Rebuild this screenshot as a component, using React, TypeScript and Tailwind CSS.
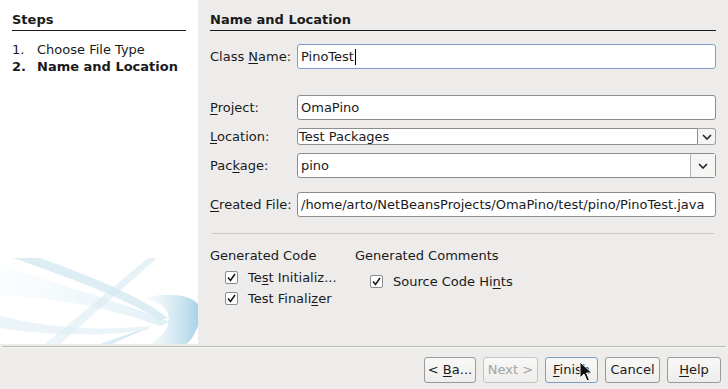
import type { ReactNode } from 'react';

const font = { fontFamily: '"DejaVu Sans", "Liberation Sans", sans-serif' };

function U({ children }: { children: ReactNode }) {
  return <span className="underline underline-offset-2">{children}</span>;
}

function Label({ children }: { children: ReactNode }) {
  return <div className="w-[87px] shrink-0 text-[13px] leading-[16px] text-[#1a1a1a]">{children}</div>;
}

function Field({ value, focused }: { value: string; focused?: boolean }) {
  return (
    <div
      className={`flex h-[25px] flex-1 items-center rounded-[3px] border bg-white px-[3px] text-[13px] text-[#1a1a1a] ${
        focused ? 'border-[#7f9dc9]' : 'border-[#8c8c8c]'
      }`}
    >
      {value}
      {focused && <span className="ml-[1px] h-[16px] w-px bg-black" />}
    </div>
  );
}

function Chevron() {
  return (
    <svg width="10" height="6" viewBox="0 0 10 6">
      <path d="M1 1 L5 5 L9 1" fill="none" stroke="#222" strokeWidth="1.6" />
    </svg>
  );
}

function Combo({ value, small }: { value: string; small?: boolean }) {
  if (small) {
    return (
      <div className="flex h-[17px] flex-1 items-stretch">
        <div className="flex flex-1 items-center rounded-l-[3px] border border-[#8c8c8c] bg-white pl-[1px] text-[13px] text-[#1a1a1a]">
          {value}
        </div>
        <div className="flex w-[18px] items-center justify-center rounded-r-[3px] border border-l-0 border-[#a0a0a0] bg-[#f5f5f4]">
          <Chevron />
        </div>
      </div>
    );
  }
  return (
    <div className="flex h-[25px] flex-1 items-stretch rounded-[3px] border border-[#8c8c8c] bg-white">
      <div className="flex flex-1 items-center px-[3px] text-[13px] text-[#1a1a1a]">{value}</div>
      <div className="flex w-[25px] items-center justify-center border-l border-[#b4b4b4] bg-[#f5f5f4]">
        <Chevron />
      </div>
    </div>
  );
}

function Check({ children }: { children: ReactNode }) {
  return (
    <div className="flex h-[21px] items-center text-[13px] text-[#1a1a1a]">
      <svg width="13" height="13" viewBox="0 0 13 13" className="mr-[10px]">
        <rect x="0.5" y="0.5" width="12" height="12" rx="1.5" fill="#fff" stroke="#8c8c8c" />
        <path d="M3 6.5 L5.5 9.5 L10 3" fill="none" stroke="#1a1a1a" strokeWidth="1.6" />
      </svg>
      <span>{children}</span>
    </div>
  );
}

function Btn({ children, w, disabled, focused }: { children: ReactNode; w: string; disabled?: boolean; focused?: boolean }) {
  return (
    <div
      className={`flex h-[26px] items-center justify-center rounded-[3px] border bg-gradient-to-b from-[#f8f8f7] to-[#eeedec] text-[13px] ${w} ${
        disabled
          ? 'border-[#c4c4c4] text-[#a4a4a4]'
          : focused
            ? 'border-[#7f9dc9] text-[#1a1a1a]'
            : 'border-[#9a9a9a] text-[#1a1a1a]'
      }`}
    >
      <span>{children}</span>
    </div>
  );
}

function Swoosh() {
  return (
    <svg width="198" height="88" viewBox="0 0 198 88" className="block">
      <defs>
        <linearGradient id="g1" x1="0" y1="0" x2="1" y2="0">
          <stop offset="0" stopColor="#d6ebf4" stopOpacity="0.2" />
          <stop offset="1" stopColor="#bcdcea" stopOpacity="0.9" />
        </linearGradient>
        <linearGradient id="g2" x1="0" y1="0" x2="1" y2="0">
          <stop offset="0" stopColor="#e4f1f7" stopOpacity="0.3" />
          <stop offset="1" stopColor="#a9d3e6" />
        </linearGradient>
        <linearGradient id="g3" x1="0" y1="0" x2="0" y2="1">
          <stop offset="0" stopColor="#cfe6f0" stopOpacity="0.8" />
          <stop offset="1" stopColor="#d8ebf3" stopOpacity="0.7" />
        </linearGradient>
      </defs>
      <path d="M0 8 C60 30 120 45 170 66 L160 70 C110 52 50 40 0 40 Z" fill="url(#g1)" opacity="0.5" />
      <path d="M13 2 L40 2 C90 20 140 40 168 62 L160 64 C120 40 70 22 13 2 Z" fill="#cde5ef" opacity="0.7" />
      <path d="M148 2 L157 2 L60 88 L45 88 Z" fill="url(#g3)" opacity="0.7" />
      <path d="M145 42 C165 36 190 38 198 48 L198 70 C194 80 190 86 186 88 L150 88 C170 78 172 62 165 52 C160 47 152 44 145 42 Z" fill="url(#g2)" />
      <path d="M100 88 L140 74 L148 72 L112 88 Z" fill="#cfe6f0" opacity="0.8" />
      <path d="M0 60 C40 70 90 76 150 70 L148 74 C90 82 40 78 0 72 Z" fill="#dcedf5" opacity="0.6" />
    </svg>
  );
}

function Cursor() {
  return (
    <svg width="14" height="22" viewBox="0 0 14 22" className="pointer-events-none absolute left-[579px] top-[361px]">
      <path d="M1 1 L1 17 L5 13 L8 20 L10.5 19 L7.5 12 L13 12 Z" fill="#111" stroke="#fff" strokeWidth="1" />
    </svg>
  );
}

export default function App() {
  return (
    <div className="relative h-[389px] w-[728px] overflow-hidden bg-[#edeceb]" style={font}>
      <div className="flex h-[344px]">
        <div className="flex w-[198px] flex-col bg-white">
          <div className="px-[12px] pt-[12px]">
            <div className="border-b border-[#1a1a1a] pb-[2px] text-[13px] font-bold leading-[16px] text-[#1a1a1a]">Steps</div>
            <div className="mt-[10px] text-[13px] leading-[17px] text-[#1a1a1a]">
              <div className="flex">
                <span className="w-[25px]">1.</span>Choose File Type
              </div>
              <div className="flex font-bold">
                <span className="w-[25px]">2.</span>Name and Location
              </div>
            </div>
          </div>
          <div className="mt-auto">
            <Swoosh />
          </div>
        </div>

        <div className="flex-1 px-[12px] pt-[12px]">
          <div className="border-b border-[#1a1a1a] pb-[2px] text-[13px] font-bold leading-[16px] text-[#1a1a1a]">Name and Location</div>

          <div className="mt-[13px] flex items-center">
            <Label>
              Class <U>N</U>ame:
            </Label>
            <Field value="PinoTest" focused />
          </div>

          <div className="mt-[26px] flex items-center">
            <Label>
              <U>P</U>roject:
            </Label>
            <Field value="OmaPino" />
          </div>

          <div className="mt-[8px] flex items-center">
            <Label>
              <U>L</U>ocation:
            </Label>
            <Combo value="Test Packages" small />
          </div>

          <div className="mt-[8px] flex items-center">
            <Label>
              Pac<U>k</U>age:
            </Label>
            <Combo value="pino" />
          </div>

          <div className="mt-[14px] flex items-center">
            <Label>
              <U>C</U>reated File:
            </Label>
            <Field value="/home/arto/NetBeansProjects/OmaPino/test/pino/PinoTest.java" />
          </div>

          <div className="mx-[2px] mt-[16px] h-px bg-[#c8c7c5]" />

          <div className="mt-[14px] flex text-[13px] text-[#1a1a1a]">
            <div className="w-[145px]">
              <div className="leading-[16px]">Generated Code</div>
              <div className="mt-[3px] pl-[15px]">
                <Check>
                  Te<U>s</U>t Initializ...
                </Check>
                <Check>
                  Test Finali<U>z</U>er
                </Check>
              </div>
            </div>
            <div>
              <div className="leading-[16px]">Generated Comments</div>
              <div className="mt-[7px] pl-[15px]">
                <Check>
                  Source Code Hi<U>n</U>ts
                </Check>
              </div>
            </div>
          </div>
        </div>
      </div>

      <div className="mx-[2px] mt-[2px] h-px bg-[#b9b8b6]" />
      <div className="h-px bg-[#f7f7f6]" />

      <div className="mt-[9px] flex justify-end gap-[7px] pr-[7px]">
        <Btn w="w-[52px]">
          &lt; <U>B</U>a...
        </Btn>
        <Btn w="w-[55px]" disabled>
          Next &gt;
        </Btn>
        <Btn w="w-[53px]" focused>
          <U>F</U>inish
        </Btn>
        <Btn w="w-[55px]">Cancel</Btn>
        <Btn w="w-[54px]">
          <U>H</U>elp
        </Btn>
      </div>

      <Cursor />
    </div>
  );
}
